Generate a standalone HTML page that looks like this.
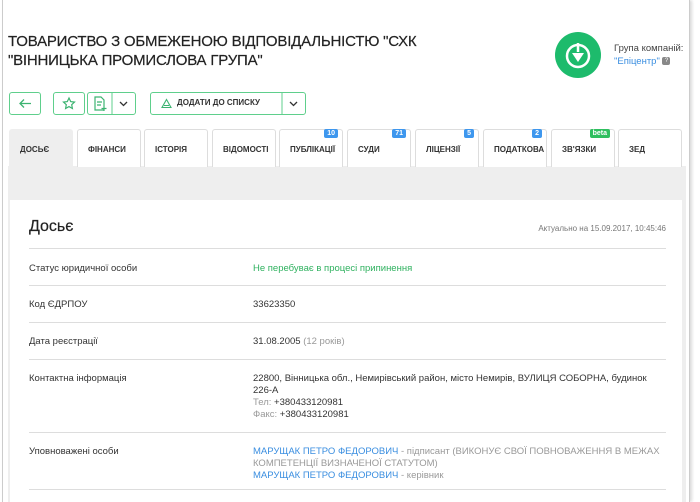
<!DOCTYPE html>
<html><head><meta charset="utf-8"><style>
*{margin:0;padding:0;box-sizing:border-box}
body{width:700px;height:502px;overflow:hidden;background:#fff;font-family:"Liberation Sans",sans-serif;color:#333;position:relative}
.frame{position:absolute;left:2px;top:0;width:688px;height:502px;border-left:1px solid #ccc;border-right:1px solid #ccc;box-shadow:2px 0 3px rgba(0,0,0,.15)}
h1{position:absolute;left:8px;top:32px;font-size:15px;font-weight:normal;line-height:19px;color:#222;letter-spacing:-.2px;-webkit-text-stroke:.2px #222}
.logo{position:absolute;left:555px;top:32px;width:46px;height:46px;border-radius:50%;background:#1dbb6c}
.grp{position:absolute;left:614px;top:42px;font-size:9.5px;line-height:13px;color:#444}
.grp a{color:#3a8ee0}
.q{display:inline-block;width:8px;height:8px;border-radius:2px;background:#888;color:#fff;font-size:6px;text-align:center;line-height:8px;vertical-align:middle}
.btn{position:absolute;top:92px;height:23px;border:1px solid #5fcf8c;border-radius:3px;background:#fff}
.tab{position:absolute;top:129px;width:64px;height:38px;border:1px solid #ddd;border-bottom:none;border-radius:3px 3px 0 0;background:#fff;font-size:8px;font-weight:bold;color:#333;padding:15px 0 0 10px}
.tab.act{background:#eee;border-color:#eee}
.b{position:absolute;top:-1px;right:4px;font-size:7px;color:#fff;background:#3e97ee;border-radius:2px;padding:0 3px;line-height:9px}
.gray{position:absolute;left:8px;top:166px;width:678px;height:336px;background:#eee}
.card{position:absolute;left:10px;top:200px;width:672px;height:302px;background:#fff}
.row{position:absolute;left:19px;width:637px;border-top:1px solid #ddd;font-size:9.5px;line-height:12px}
.l{position:absolute;left:0}
.v{position:absolute;left:224px;width:405px}
.g{color:#999}.bl{color:#3a8ee0}
</style></head><body>
<div class="frame"></div>
<h1>ТОВАРИСТВО З ОБМЕЖЕНОЮ ВІДПОВІДАЛЬНІСТЮ "СХК<br>"ВІННИЦЬКА ПРОМИСЛОВА ГРУПА"</h1>
<div class="logo"><svg width="46" height="46" viewBox="0 0 46 46"><circle cx="23" cy="24" r="11" fill="none" stroke="#fff" stroke-width="2.5"/><path d="M23 11v9" stroke="#fff" stroke-width="2.5"/><path d="M17 21h12l-6 9z" fill="#fff"/></svg></div>
<div class="grp">Група компаній:<br><a>"Епіцентр"</a> <span class="q">?</span></div>
<div class="btn" style="left:9px;width:32px"><svg width="30" height="21"><path d="M10 10.5h11M14 6.5l-4 4 4 4" fill="none" stroke="#3cb371" stroke-width="1.3"/></svg></div>
<div class="btn" style="left:53px;width:32px"><svg width="30" height="21"><path d="M15 5l1.7 3.6 3.8.5-2.8 2.6.7 3.8-3.4-1.9-3.4 1.9.7-3.8-2.8-2.6 3.8-.5z" fill="none" stroke="#3cb371" stroke-width="1.2"/></svg></div>
<div class="btn" style="left:87px;width:49px"><svg width="47" height="21"><path d="M7 4h6l3 3v10H7z M9 9h5M9 12h4M16 13v5M13.5 15.5h5" fill="none" stroke="#3cb371" stroke-width="1.2"/><path d="M24 0v21" stroke="#5fcf8c"/><path d="M32 9l3.5 3.5 3.5-3.5" fill="none" stroke="#333" stroke-width="1.3"/></svg></div>
<div class="btn" style="left:150px;width:156px"><svg width="154" height="21" style="position:absolute;left:0;top:0"><path d="M11 14.5h9l-4.5-8z M13 12.5h5" fill="none" stroke="#3cb371" stroke-width="1.1"/><path d="M131 0v21" stroke="#5fcf8c"/><path d="M139 9l3.5 3.5 3.5-3.5" fill="none" stroke="#333" stroke-width="1.3"/></svg><span style="position:absolute;left:26px;top:5px;font-size:8px;font-weight:bold;color:#333">ДОДАТИ ДО СПИСКУ</span></div>
<div class="gray"></div>
<div class="tab act" style="left:9px">ДОСЬЄ</div>
<div class="tab" style="left:77px">ФІНАНСИ</div>
<div class="tab" style="left:144px">ІСТОРІЯ</div>
<div class="tab" style="left:212px">ВІДОМОСТІ</div>
<div class="tab" style="left:279px">ПУБЛІКАЦІЇ<span class="b">10</span></div>
<div class="tab" style="left:347px">СУДИ<span class="b">71</span></div>
<div class="tab" style="left:415px">ЛІЦЕНЗІЇ<span class="b">5</span></div>
<div class="tab" style="left:483px">ПОДАТКОВА<span class="b">2</span></div>
<div class="tab" style="left:551px">ЗВ'ЯЗКИ<span class="b" style="background:#2fbf5f">beta</span></div>
<div class="tab" style="left:618px">ЗЕД</div>
<div class="card">
<div style="position:absolute;left:19px;top:18px;font-size:16px;color:#222;-webkit-text-stroke:.2px #222">Досьє</div>
<div style="position:absolute;right:16px;top:24px;font-size:8px;color:#777">Актуально на 15.09.2017, 10:45:46</div>
<div class="row" style="top:48px;height:37px"><span class="l" style="top:14px">Статус юридичної особи</span><span class="v" style="top:14px;color:#2fb15f">Не перебуває в процесі припинення</span></div>
<div class="row" style="top:85px;height:37px"><span class="l" style="top:13px">Код ЄДРПОУ</span><span class="v" style="top:13px">33623350</span></div>
<div class="row" style="top:122px;height:37px"><span class="l" style="top:13px">Дата реєстрації</span><span class="v" style="top:13px">31.08.2005 <span class="g">(12 років)</span></span></div>
<div class="row" style="top:159px;height:73px"><span class="l" style="top:13px">Контактна інформація</span><span class="v" style="top:13px">22800, Вінницька обл., Немирівський район, місто Немирів, ВУЛИЦЯ СОБОРНА, будинок<br>226-А<br><span class="g">Тел:</span> +380433120981<br><span class="g">Факс:</span> +380433120981</span></div>
<div class="row" style="top:232px;height:58px;border-bottom:1px solid #ddd"><span class="l" style="top:13px">Уповноважені особи</span><span class="v g" style="top:13px;width:420px"><span class="bl">МАРУЩАК ПЕТРО ФЕДОРОВИЧ</span> - підписант (ВИКОНУЄ СВОЇ ПОВНОВАЖЕННЯ В МЕЖАХ<br>КОМПЕТЕНЦІЇ ВИЗНАЧЕНОЇ СТАТУТОМ)<br><span class="bl">МАРУЩАК ПЕТРО ФЕДОРОВИЧ</span> - керівник</span></div>
</div>
</body></html>
